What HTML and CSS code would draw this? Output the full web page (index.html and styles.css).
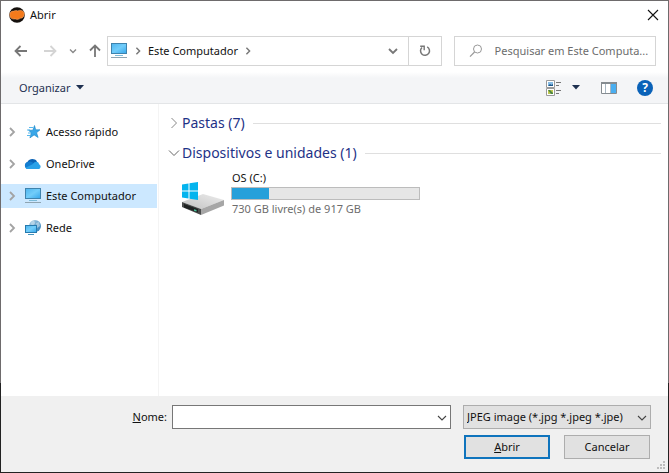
FILE: index.html
```html
<!DOCTYPE html>
<html lang="pt-BR">
<head>
<meta charset="utf-8">
<meta name="viewport" content="width=device-width, initial-scale=1">
<title>Abrir</title>
<link rel="stylesheet" href="styles.css">
</head>
<body>
<svg width="0" height="0" class="defs" aria-hidden="true">
  <defs>
    <linearGradient id="screen" x1="0" y1="0" x2="1" y2="1">
      <stop offset="0" stop-color="#4db4ee"/><stop offset=".5" stop-color="#72cdfa"/><stop offset="1" stop-color="#35a6ea"/>
    </linearGradient>
    <linearGradient id="globe" x1="0" y1="0" x2="1" y2="1">
      <stop offset="0" stop-color="#b9d6e8"/><stop offset="1" stop-color="#2277b5"/>
    </linearGradient>
    <linearGradient id="drivetop" x1="0" y1="1" x2="1" y2="0">
      <stop offset="0" stop-color="#c2c2c2"/><stop offset="1" stop-color="#ececec"/>
    </linearGradient>
    <symbol id="pc" viewBox="0 0 18 18">
      <rect x="1.5" y="1.5" width="15" height="10" fill="url(#screen)" stroke="#3f83ad"/>
      <path d="M5 13.5h8" stroke="#7cbbd9"/>
      <path d="M1 15.5h16" stroke="#8fa5b2"/>
    </symbol>
    <symbol id="right" viewBox="0 0 8 10">
      <path d="M2 1l4 4-4 4" fill="none" stroke="currentColor" stroke-width="1.8"/>
    </symbol>
    <symbol id="down" viewBox="0 0 10 8">
      <path d="M1 2l4 4 4-4" fill="none" stroke="currentColor" stroke-width="1.8"/>
    </symbol>
    <symbol id="thindown" viewBox="0 0 10 8">
      <path d="M1 2l4 4 4-4" fill="none" stroke="currentColor" stroke-width="1.1"/>
    </symbol>
    <symbol id="caret" viewBox="0 0 8 5"><path d="M0 0h8L4 4.5z" fill="currentColor"/></symbol>
  </defs>
</svg>
<main class="dialog">
  <header class="titlebar">
    <svg width="16" height="16" viewBox="0 0 16 16" aria-hidden="true">
      <circle cx="8" cy="8" r="7.8" fill="#15100d"/>
      <path d="M.8 8.8C.3 5.8 2 3.9 4.700 4.100 6 3.300 7.500 3.300 8.700 3.900 11 2.600 14.400 3.300 15.200 5.900 15.700 8.800 14 11.300 11.300 11.300 10 12.500 7.700 12.700 6.300 12 3.600 12.500 1.200 11.500.8 8.800z" fill="#f47a1b" stroke="#f7b27b" stroke-width=".5"/>
    </svg>
    <h1>Abrir</h1>
    <button class="close" aria-label="Fechar"><svg width="12" height="12" viewBox="0 0 12 12"><path d="M1 1l10 10M11 1L1 11" stroke="#111" stroke-width="1.1"/></svg></button>
  </header>

  <div class="navbar">
    <div class="history">
      <button aria-label="Voltar"><svg width="14" height="12" viewBox="0 0 14 12"><path d="M13 6H2M6.500 1L1.500 6l5 5" fill="none" stroke="#777" stroke-width="1.8"/></svg></button>
      <button aria-label="Avançar"><svg width="14" height="12" viewBox="0 0 14 12"><path d="M1 6h11M7.500 1l5 5-5 5" fill="none" stroke="#d4d4d4" stroke-width="1.8"/></svg></button>
      <button class="recent" aria-label="Locais recentes"><svg width="8" height="6"><use href="#down"/></svg></button>
      <button aria-label="Acima"><svg width="12" height="14" viewBox="0 0 12 14"><path d="M6 13V2M1 6.500l5-5 5 5" fill="none" stroke="#777" stroke-width="1.8"/></svg></button>
    </div>
    <div class="address">
      <svg width="18" height="18"><use href="#pc"/></svg>
      <svg class="crumb" width="8" height="8"><use href="#right"/></svg>
      <a href="#">Este Computador</a>
      <svg class="crumb" width="8" height="8"><use href="#right"/></svg>
      <button class="expand" aria-label="Locais anteriores"><svg width="10" height="8"><use href="#down"/></svg></button>
      <button class="refresh" aria-label="Atualizar"><svg width="12" height="12" viewBox="0 0 12 12"><path d="M8.200 1.900A4.500 4.500 0 1 1 3 2.500" fill="none" stroke="#777" stroke-width="1.500"/><path d="M1.200 1.200h4v4" fill="none" stroke="#777" stroke-width="1.400"/></svg></button>
    </div>
    <div class="search">
      <svg width="14" height="14" viewBox="0 0 14 14" aria-hidden="true"><circle cx="8.500" cy="5" r="4" fill="none" stroke="#999"/><path d="M5.600 8L1 12.600" stroke="#999" stroke-width="1.200"/></svg>
      <input type="text" aria-label="Pesquisar" placeholder="Pesquisar em Este Computa...">
    </div>
  </div>

  <div class="toolbar">
    <button class="organize">Organizar <svg width="8" height="5"><use href="#caret"/></svg></button>
    <button class="view" aria-label="Modo de exibição">
      <svg width="16" height="16" viewBox="0 0 16 16"><path d="M.5.5h8v7h-8zM.5 8.500h8v7h-8z" fill="#fff" stroke="#9a9a9a"/><path d="M2 2h5v4H2z" fill="#86bce5"/><path d="M2 6l2-2 1.500 1L7 4v2z" fill="#1d5688"/><path d="M2 10h5v4H2z" fill="#c0c850"/><path d="M2 10h2l3 3v1H5z" fill="#4c8543"/><path d="M10 2.500h5M10 5.500h3M10 10.500h5M10 13.500h3" stroke="#777"/></svg>
    </button>
    <button class="viewmenu" aria-label="Mais opções"><svg width="8" height="5"><use href="#caret"/></svg></button>
    <button class="pane" aria-label="Painel de visualização">
      <svg width="16" height="12" viewBox="0 0 16 12"><path d="M.5.5h15v11H.5z" fill="#fff" stroke="#858b90"/><path d="M0 0h16v2H0z" fill="#858b90"/><path d="M10 2h5v9h-5z" fill="#4aaef0"/><path d="M4.500 2v9M9.500 2v9" stroke="#a7b6c2"/></svg>
    </button>
    <button class="help" aria-label="Ajuda">?</button>
  </div>

  <div class="content">
    <nav class="tree" aria-label="Pastas">
      <a href="#"><svg class="twist" width="8" height="10"><use href="#right"/></svg>
        <svg width="18" height="18" viewBox="0 0 18 18"><path d="M10.500 2.500l1.200 4.300H16l-3.400 2.900 1.500 4.800-4-2.600-4.200 3 1.400-5L4.500 7.200h4.300z" fill="#38a6e8" stroke="#1685c7" stroke-width=".6"/><path d="M5 4.500h4M3 7h3M4 10h3M3 12.500h3" stroke="#57b8ed"/></svg>
        <span>Acesso rápido</span></a>
      <a href="#"><svg class="twist" width="8" height="10"><use href="#right"/></svg>
        <svg width="18" height="18" viewBox="0 0 18 18"><path d="M4 14a3.800 3.800 0 0 1-.4-7.200A5.500 5.500 0 0 1 13 6.500l-5 7z" fill="#0b63b5"/><path d="M3.500 7c3-1.500 5 .2 8.500 2.400L7 14H4C.5 14-.6 8.700 3.500 7z" fill="#137dd0"/><path d="M9 9c1.500-3 5.500-3 6 .2 2.500 1 2 4.800-.8 4.800H4c-1 0-2-.4-2.500-1.200z" fill="#29a1e8"/></svg>
        <span>OneDrive</span></a>
      <a href="#" class="selected" aria-current="true"><svg class="twist" width="8" height="10"><use href="#right"/></svg>
        <svg width="18" height="18"><use href="#pc"/></svg>
        <span>Este Computador</span></a>
      <a href="#"><svg class="twist" width="8" height="10"><use href="#right"/></svg>
        <svg width="18" height="18" viewBox="0 0 18 18"><circle cx="11" cy="7" r="6" fill="url(#globe)"/><path d="M7 4c2-3 4-2 4 0S8 6 8 8zM12 4l3-1 1 4-3 2z" fill="#e0edf5" opacity=".5"/><rect x="1.500" y="6.500" width="11" height="7" fill="url(#screen)" stroke="#267aae"/><path d="M4 15.500h6" stroke="#4594bf"/></svg>
        <span>Rede</span></a>
    </nav>
    <section class="files">
      <h2><svg width="8" height="12" viewBox="0 0 8 12"><path d="M1.500 1l5 5-5 5" fill="none" stroke="#888"/></svg><span>Pastas (7)</span></h2>
      <h2><svg width="12" height="8" viewBox="0 0 12 8"><path d="M1 1.500l5 5 5-5" fill="none" stroke="#666"/></svg><span>Dispositivos e unidades (1)</span></h2>
      <article class="drive">
        <svg width="44" height="36" viewBox="0 0 44 36" aria-hidden="true">
          <path d="M1 21L22 13l21 6-23 9z" fill="url(#drivetop)"/>
          <path d="M1 21l19 7v6L1 26z" fill="#494b4b"/><path d="M20 28l23-9v5.500L20 34z" fill="#a6a6a6"/>
          <path d="M3 23l14 5v3.500L3 26.500z" fill="#202323"/><path d="M13 28.300l2.500.8v1.400l-2.500-.8z" fill="#48c69c"/>
          <path d="M1 3.500L7.500 2.500V9.500H1zM8.500 2.300L17 1v8.500H8.500zM1 10.500h6.500v7L1 16.500zM8.500 10.500H17V19l-8.500-1.300z" fill="#04b4ee"/>
        </svg>
        <div class="info">
          <h3>OS (C:)</h3>
          <div class="meter" role="meter" aria-label="Espaço usado" aria-valuemin="0" aria-valuemax="917" aria-valuenow="187"><div style="width:20%"></div></div>
          <p>730 GB livre(s) de 917 GB</p>
        </div>
      </article>
    </section>
  </div>

  <footer class="footer">
    <label for="name"><u>N</u>ome:</label>
    <div class="field combo"><input id="name" type="text"><svg width="10" height="8"><use href="#thindown"/></svg></div>
    <div class="field type">
      <select aria-label="Tipo de arquivo"><option>JPEG image (*.jpg *.jpeg *.jpe)</option></select>
      <svg width="10" height="8"><use href="#thindown"/></svg>
    </div>
    <div class="actions"><button class="primary"><u>A</u>brir</button><button>Cancelar</button></div>
    <svg class="grip" width="9" height="9" viewBox="0 0 9 9" aria-hidden="true"><path d="M6 0h2v2H6zM3 3h2v2H3zM6 3h2v2H6zM0 6h2v2H0zM3 6h2v2H3zM6 6h2v2H6z" fill="#bcbcbc"/></svg>
  </footer>
</main>
</body>
</html>
```
FILE: styles.css
```css
* { box-sizing: border-box; }

body {
  margin: 0;
  font: 11px/16px "Noto Sans", "Open Sans", sans-serif;
  color: #111;
}

h1, h2, h3, p { margin: 0; font-size: 11px; font-weight: 400; }
a { color: inherit; text-decoration: none; }
svg { display: block; flex: none; }
.defs { position: absolute; }

button, input, select {
  font: inherit;
  color: inherit;
  border: 0;
  border-radius: 0;
  background: none;
  padding: 0;
  margin: 0;
  min-width: 0;
}

input { outline: none; }

.dialog {
  display: flex;
  flex-direction: column;
  min-height: 100vh;
  background: #fff;
  border: 1px solid;
  border-image: linear-gradient(#6e6b6c 81%, #222 81%) 1;
}

.titlebar {
  display: flex;
  align-items: center;
  gap: 5px;
  height: 28px;
  padding: 0 9px 0 8px;
}
.close { margin-left: auto; }

.navbar {
  display: grid;
  grid-template-columns: 93px minmax(0, 334fr) minmax(0, 214fr);
  align-items: center;
  height: 43px;
  padding: 0 12px 0 13px;
}
.history { display: flex; align-items: center; gap: 12px; }
.history button { display: flex; }
.history button:nth-child(2) { margin-left: 3px; }
.history .recent { color: #888; }

.address {
  display: flex;
  align-items: center;
  height: 30px;
  padding-left: 2px;
  border: 1px solid #d5d5d5;
}
.crumb { margin: 0 6px; color: #777; }
.address a { white-space: nowrap; }
.expand { margin-left: auto; padding: 0 10px; color: #777; }
.refresh {
  display: flex;
  align-items: center;
  justify-content: center;
  align-self: stretch;
  width: 33px;
  border-left: 1px solid #d5d5d5;
}

.search {
  display: flex;
  align-items: center;
  gap: 12px;
  height: 30px;
  margin-left: 12px;
  padding-left: 14px;
  border: 1px solid #d5d5d5;
}
.search input { flex: 1; }
.search input::placeholder { color: #6c6c6c; opacity: 1; }

.toolbar {
  display: flex;
  align-items: center;
  height: 32px;
  padding: 0 15px 0 18px;
  background: linear-gradient(#fff, #f4f5f7 6px);
  border-bottom: 1px solid #e3e5e7;
  color: #1e3050;
}
.organize { display: flex; align-items: center; gap: 6px; margin-right: auto; }
.viewmenu { margin: 0 21px 0 10px; }
.help {
  width: 16px;
  height: 16px;
  margin-left: 20px;
  border-radius: 50%;
  background: #0a62b8;
  color: #fff;
  font-size: 12px;
  font-weight: 700;
}

.content { display: flex; flex: 1; }

.tree {
  display: flex;
  flex-direction: column;
  gap: 8px;
  width: 158px;
  padding: 16px 1px 0 0;
  border-right: 1px solid #f4f4f4;
}
.tree a {
  display: flex;
  align-items: center;
  height: 24px;
  padding-left: 7px;
}
.tree a.selected { background: #cce8ff; }
.twist { margin-right: 8px; color: #a3a3a3; }
.tree span { margin-left: 4px; white-space: nowrap; }

.files { flex: 1; padding: 4px 7px 0 9px; }
.files h2 {
  display: flex;
  align-items: center;
  height: 30px;
  font-size: 14px;
  line-height: 20px;
  color: #1e3287;
}
.files h2 svg { width: 12px; margin-right: 2px; }
.files h2 span { white-space: nowrap; }
.files h2::after {
  content: "";
  flex: 1;
  height: 1px;
  margin-left: 8px;
  background: #dfdfdf;
}

.drive { display: flex; gap: 6px; padding: 2px 0 0 13px; }
.drive > svg { margin-top: 11px; }
.info { width: 189px; }
.meter {
  height: 13px;
  margin: 1px 0;
  border: 1px solid #bcbcbc;
  background: #e6e6e6;
}
.meter div { height: 100%; background: #26a0da; }
.info h3, .info p { padding-left: 1px; }
.info p { color: #6d6d6d; }

.footer {
  position: relative;
  display: grid;
  grid-template-columns: 166px 1fr 188px;
  column-gap: 5px;
  row-gap: 6px;
  padding: 9px 17px 13px 0;
  background: #f0f0f0;
}
.footer label { justify-self: end; line-height: 24px; }
.field { position: relative; display: flex; height: 24px; }
.field input, .field select { width: 100%; border: 1px solid #777; background: #fff; }
.field input { padding: 0 20px 0 4px; }
.field select {
  appearance: none;
  padding: 0 16px 0 3px;
  border-color: #adadad;
  background: #e1e1e1;
}
.field svg { position: absolute; right: 4px; top: 9px; color: #444; pointer-events: none; }
.combo { margin-right: 7px; }
.actions {
  grid-column: 3;
  display: grid;
  grid-template-columns: 1fr 1fr;
  gap: 14px;
  padding: 0 1px;
}
.actions button { height: 24px; border: 1px solid #adadad; background: #e1e1e1; }
.actions .primary { border: 2px solid #0f74bd; }
.grip { position: absolute; right: 2px; bottom: 2px; }
```
